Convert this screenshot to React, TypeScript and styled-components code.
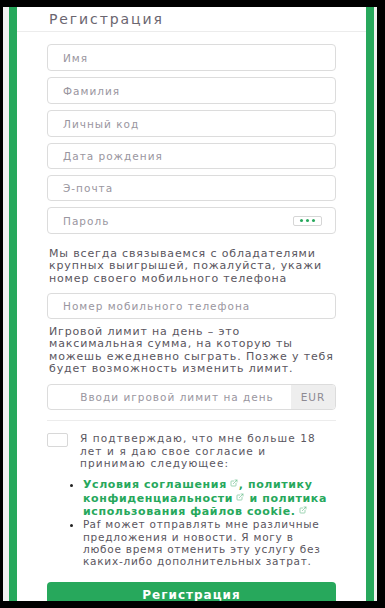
import styled, { createGlobalStyle } from "styled-components";
import { ExternalLink } from "lucide-react";

const GREEN = "#27a85c";

const GlobalStyle = createGlobalStyle`
  html, body {
    margin: 0;
    padding: 0;
    background: #000;
  }
  * {
    box-sizing: border-box;
  }
`;

const Frame = styled.div`
  height: 608px;
  padding: 7px 8px 7px 3px;
  background: #000;
`;

const Screen = styled.div`
  height: 100%;
  background: #f1f1f1;
  padding: 0 3px 0 6px;
  overflow: hidden;
`;

const Card = styled.div`
  height: 100%;
  background: #fff;
  border-left: 8px solid ${GREEN};
  border-right: 8px solid ${GREEN};
  overflow: hidden;
  font-family: "DejaVu Sans", "Liberation Sans", sans-serif;
  color: #5a5660;
`;

const Header = styled.div`
  height: 25px;
  display: flex;
  align-items: center;
  padding-left: 32px;
  border-bottom: 1px solid #ececec;
  font-size: 14px;
  letter-spacing: 1.9px;
  color: #6b6670;
`;

const Form = styled.div`
  padding: 12px 30px 0 30px;
  display: flex;
  flex-direction: column;
`;

const Field = styled.div<{ $h?: number; $mb?: number }>`
  height: ${(p) => p.$h ?? 27}px;
  margin-bottom: ${(p) => p.$mb ?? 6}px;
  border: 1px solid #dcdcdc;
  border-radius: 4px;
  display: flex;
  align-items: center;
  padding-left: 15px;
  font-size: 10.5px;
  letter-spacing: 1px;
  color: #9a96a0;
  overflow: hidden;
`;

const Placeholder = styled.span<{ $center?: boolean }>`
  flex: 1;
  text-align: ${(p) => (p.$center ? "center" : "left")};
  white-space: nowrap;
`;

const DotsToggle = styled.span`
  width: 29px;
  height: 10px;
  margin-right: 13px;
  border: 1px solid #d6d6d6;
  border-radius: 2px;
  display: flex;
  align-items: center;
  justify-content: center;
  gap: 3px;
`;

const Dot = styled.i`
  width: 3px;
  height: 3px;
  border-radius: 50%;
  background: ${GREEN};
`;

const Addon = styled.span`
  width: 44px;
  height: 100%;
  background: #eeeeee;
  display: flex;
  align-items: center;
  justify-content: center;
  color: #8d8a92;
`;

const Text = styled.p<{ $mt: number; $mb: number }>`
  margin: ${(p) => p.$mt}px 0 ${(p) => p.$mb}px 2px;
  font-size: 11px;
  line-height: 12.33px;
  letter-spacing: 0.85px;
  color: #5a5660;
`;

const Divider = styled.hr`
  border: 0;
  border-top: 1px solid #ececec;
  margin: 10px 0 11px 0;
  width: 100%;
`;

const ConsentRow = styled.div`
  display: flex;
  gap: 12px;
  padding-right: 10px;
  font-size: 10.5px;
  line-height: 12.33px;
  letter-spacing: 1.1px;
`;

const Checkbox = styled.span`
  flex: none;
  width: 21px;
  height: 14px;
  margin-top: 1px;
  border: 1px solid #d8d8d8;
  border-radius: 2px;
`;

const List = styled.ul`
  margin: 9px 0 0 0;
  padding-left: 36px;
  font-size: 10.5px;
  line-height: 12.33px;
  letter-spacing: 0.75px;
`;

const Item = styled.li`
  &::marker {
    color: #222;
  }
`;

const LinkText = styled.a`
  color: ${GREEN};
  font-weight: bold;
  font-size: 11px;
  letter-spacing: 0.6px;
  text-decoration: none;
`;

const LinkIcon = styled(ExternalLink)`
  color: #6ec08f;
  margin: 0 1px 0 3px;
  vertical-align: 1px;
`;

const Button = styled.button`
  margin-top: 14px;
  height: 27px;
  border: 0;
  border-radius: 4px;
  background: ${GREEN};
  color: #fff;
  font-family: inherit;
  font-weight: bold;
  font-size: 12px;
  letter-spacing: 1px;
`;

const Ext = () => <LinkIcon size={8} strokeWidth={2} />;

export default function App() {
  return (
    <Frame>
      <GlobalStyle />
      <Screen>
        <Card>
          <Header>Регистрация</Header>
          <Form>
            <Field>
              <Placeholder>Имя</Placeholder>
            </Field>
            <Field>
              <Placeholder>Фамилия</Placeholder>
            </Field>
            <Field>
              <Placeholder>Личный код</Placeholder>
            </Field>
            <Field $h={26}>
              <Placeholder>Дата рождения</Placeholder>
            </Field>
            <Field $h={26}>
              <Placeholder>Э-почта</Placeholder>
            </Field>
            <Field $mb={0}>
              <Placeholder>Пароль</Placeholder>
              <DotsToggle>
                <Dot />
                <Dot />
                <Dot />
              </DotsToggle>
            </Field>
            <Text $mt={14} $mb={8}>
              Мы всегда связываемся с обладателями крупных выигрышей,
              пожалуйста, укажи номер своего мобильного телефона
            </Text>
            <Field $h={26} $mb={0}>
              <Placeholder>Номер мобильного телефона</Placeholder>
            </Field>
            <Text $mt={7} $mb={9}>
              Игровой лимит на день – это максимальная сумма, на которую ты
              можешь ежедневно сыграть. Позже у тебя будет возможность
              изменить лимит.
            </Text>
            <Field $h={26} $mb={0}>
              <Placeholder $center>Вводи игровой лимит на день</Placeholder>
              <Addon>EUR</Addon>
            </Field>
            <Divider />
            <ConsentRow>
              <Checkbox />
              <span>
                Я подтверждаю, что мне больше 18 лет и я даю свое согласие и
                принимаю следующее:
              </span>
            </ConsentRow>
            <List>
              <Item>
                <LinkText href="#">Условия соглашения</LinkText>
                <Ext />
                <LinkText href="#">, политику конфиденциальности</LinkText>
                <Ext />
                <LinkText href="#"> и политика использования файлов cookie.</LinkText>
                <Ext />
              </Item>
              <Item>
                Paf может отправлять мне различные предложения и новости. Я
                могу в любое время отменить эту услугу без каких-либо
                дополнительных затрат.
              </Item>
            </List>
            <Button>Регистрация</Button>
          </Form>
        </Card>
      </Screen>
    </Frame>
  );
}
